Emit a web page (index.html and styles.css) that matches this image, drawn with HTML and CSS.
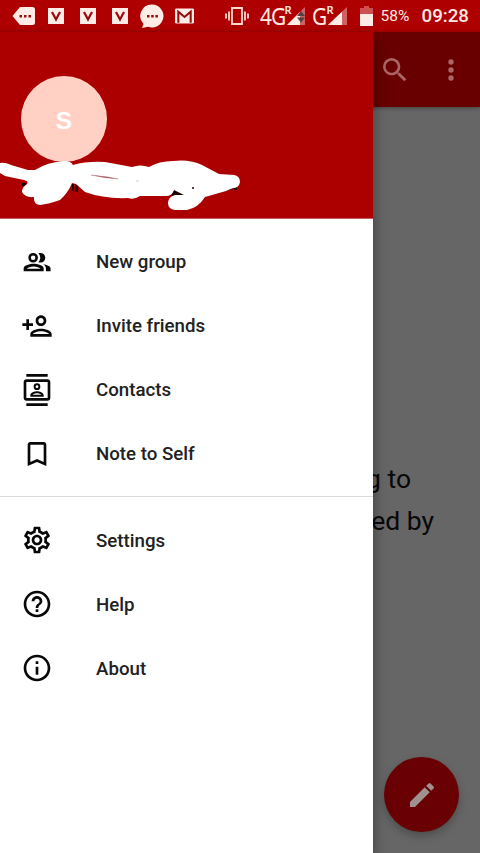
FILE: index.html
```html
<!DOCTYPE html>
<html lang="en">
<head>
<meta charset="utf-8">
<title>Messages</title>
<link rel="stylesheet" href="styles.css">
</head>
<body>
<div class="screen">
  <header class="status">
    <div class="notifications">
      <svg width="24" height="20" viewBox="0 0 24 20"><path class="light" d="M8 1h12.500a2.500 2.500 0 0 1 2.500 2.500v13a2.500 2.500 0 0 1-2.500 2.500H8L.5 10z"/><path class="red" d="M7.500 9h2.500v2.500H7.500zM12 9h2.500v2.500H12zM16.500 9h2.500v2.500h-2.500z"/></svg>
      <svg width="16" height="16" viewBox="0 0 16 16"><path class="light" d="M0 0h16v16H0z"/><path class="red-line" d="M4 4l4 7.500 4-7.500"/></svg>
      <svg width="16" height="16" viewBox="0 0 16 16"><path class="light" d="M0 0h16v16H0z"/><path class="red-line" d="M4 4l4 7.500 4-7.500"/></svg>
      <svg width="16" height="16" viewBox="0 0 16 16"><path class="light" d="M0 0h16v16H0z"/><path class="red-line" d="M4 4l4 7.500 4-7.500"/></svg>
      <svg class="bubble" width="24" height="24" viewBox="0 0 24 24"><path class="light" d="M12 .5a11.500 11.500 0 1 1-4 22.300L2 24l1.500-4A11.500 11.500 0 0 1 12 .5z"/><path class="red" d="M7 11h2.500v2.500H7zM11.200 11h2.500v2.500h-2.500zM15.400 11h2.500v2.500h-2.500z"/></svg>
      <svg class="mail" width="19" height="16" viewBox="0 0 20 16"><rect class="light" width="20" height="16" rx="1.500"/><path class="red-line" d="M3.500 15V3.500L10 9l6.500-5.500V15"/></svg>
    </div>
    <div class="system">
      <svg class="vibrate" width="24" height="20" viewBox="0 0 24 20"><path class="light-line" d="M7 2h10v16H7zM4 5.500v9M1 7.500v5M20 5.500v9M23 7.500v5"/></svg>
      <span class="net net-a"><b>4G</b><sup>R</sup></span>
      <svg class="signal signal-a" width="18" height="18" viewBox="0 0 18 18"><path class="faint" d="M0 18L18 0v18z"/><path class="light" d="M0 18L13 5v13z"/><path class="arrows" d="M14 4l4 5h-8zM10 10.500h8l-4 5z"/></svg>
      <span class="net net-b"><b>G</b><sup>R</sup></span>
      <svg class="signal signal-b" width="19" height="18" viewBox="0 0 19 18"><path class="faint" d="M0 18L19 0v18z"/><path class="light" d="M0 18L14 4.700V18z"/></svg>
      <svg class="battery" width="13" height="20" viewBox="0 0 13 20"><path class="charge-empty" d="M4 0h5v2h4v7H0V2h4z"/><path class="light" d="M0 8h13v12H0z"/></svg>
      <span class="percent">58%</span>
      <span class="clock">09:28</span>
    </div>
  </header>

  <main class="page">
    <div class="toolbar">
      <svg width="32" height="32" viewBox="0 0 24 24"><path d="M15.500 14h-.79l-.28-.27A6.471 6.471 0 0 0 16 9.500 6.500 6.500 0 1 0 9.500 16c1.610 0 3.090-.59 4.230-1.570l.27.28v.79l5 4.990L20.490 19l-4.990-5zm-6 0C7.010 14 5 11.990 5 9.500S7.010 5 9.500 5 14 7.010 14 9.500 11.990 14 9.500 14z"/></svg>
      <svg width="32" height="32" viewBox="0 0 24 24"><circle cx="12" cy="6" r="2"/><circle cx="12" cy="12" r="2"/><circle cx="12" cy="18" r="2"/></svg>
    </div>
    <div class="empty">
      <p class="line-one">g to</p>
      <p class="line-two">ed by</p>
    </div>
    <div class="compose">
      <svg width="32" height="32" viewBox="0 0 24 24"><path d="M3 17.250V21h3.750L17.810 9.940l-3.750-3.750L3 17.250zM20.710 7.040a1 1 0 0 0 0-1.410l-2.340-2.340a1 1 0 0 0-1.410 0l-1.830 1.830 3.750 3.750 1.830-1.830z"/></svg>
    </div>
  </main>

  <aside class="drawer">
    <div class="profile">
      <div class="avatar">S</div>
      <svg class="scribble" width="250" height="52" viewBox="0 158 250 52">
        <path class="ink" d="M22 183h4v3h-4zM72 184h2v7h-2zM75 185h3v7h-3zM172 188h16v8h-16zM227 187h4v3h-4zM234 187h3v3h-3z"/>
        <path class="paint" d="M0 163Q5 162 11 165L28 170H35Q47 162 65 161Q71 161 73 165Q87 161 105 162L132 167Q140 164 149 167Q159 161 173 161Q190 159 202 165L219 174L234 175Q240 176 240 182Q239 188 233 188L226 191L205 197Q198 208 187 210H175Q168 209 168 203Q168 197 175 195H184L174 190Q172 196 166 196H140Q134 200 128 198Q104 199 85 192L76 184L72 183Q68 193 60 200Q49 204 40 205Q33 204 34 197Q25 198 22 192Q22 187 27 184Q29 181 24 180L5 176L0 173z"/>
        <path class="gap" d="M91 175L108 177L118 179L104 177.500zM136 181h3"/>
        <circle class="ink" cx="193" cy="188" r="1"/>
      </svg>
    </div>
    <nav class="menu">
      <div class="item"><svg viewBox="0 0 24 24"><path fill-rule="evenodd" d="M9.100 5.200a3.600 3.600 0 1 1 0 7.200 3.600 3.600 0 0 1 0-7.200zm0 1.900a1.700 1.700 0 1 0 0 3.400 1.700 1.700 0 0 0 0-3.400zM13 5.400c3-.9 5.200 1 5.200 3.400s-2.200 4.300-5.200 3.400c1.900-2 1.900-4.800 0-6.800zM2 19v-2.300c0-2.100 4.600-3.300 7.500-3.300s7.500 1.200 7.500 3.300V19zm2.300-1.900h10.400c-.6-.9-3-1.800-5.200-1.800s-4.600.9-5.200 1.800zM16.600 13.700c2.600.4 5.600 1.300 5.600 3.200V19h-3.500v-2.200c0-1.300-.8-2.300-2.100-3.100z"/></svg><span>New group</span></div>
      <div class="item"><svg viewBox="0 0 24 24"><path d="M15 12c2.210 0 4-1.790 4-4s-1.790-4-4-4-4 1.790-4 4 1.790 4 4 4zm0-6c1.100 0 2 .9 2 2s-.9 2-2 2-2-.9-2-2 .9-2 2-2zm0 8c-2.670 0-8 1.340-8 4v2h16v-2c0-2.660-5.330-4-8-4zm-6 4c.22-.72 3.310-2 6-2 2.700 0 5.800 1.290 6 2H9zm-3-3v-3h3v-2H6V7H4v3H1v2h3v3z"/></svg><span>Invite friends</span></div>
      <div class="item"><svg viewBox="0 0 24 24"><path d="M20 4H4c-1.100 0-2 .9-2 2v12c0 1.100.9 2 2 2h16c1.100 0 2-.9 2-2V6c0-1.100-.9-2-2-2zm0 14H4V6h16v12zM4 0h16v2H4zm0 22h16v2H4zm8-10a2.500 2.500 0 0 0 0-5 2.500 2.500 0 0 0 0 5zm0-3.500c.55 0 1 .45 1 1s-.45 1-1 1-1-.45-1-1 .45-1 1-1zm5 7.490C17 13.900 13.690 13 12 13s-5 .9-5 2.990V17h10v-1.010zm-8.190-.49c.61-.52 2.030-1 3.190-1 1.170 0 2.590.48 3.200 1H8.810z"/></svg><span>Contacts</span></div>
      <div class="item"><svg viewBox="0 0 24 24"><path d="M17 3H7c-1.100 0-2 .9-2 2v16l7-3 7 3V5c0-1.100-.9-2-2-2zm0 15l-5-2.180L7 18V5h10v13z"/></svg><span>Note to Self</span></div>
    </nav>
    <nav class="menu more">
      <div class="item"><svg viewBox="0 0 24 24"><path d="M19.430 12.980c.04-.32.07-.64.07-.98 0-.34-.03-.66-.07-.98l2.110-1.650c.19-.15.24-.42.12-.64l-2-3.460c-.09-.16-.26-.25-.44-.25-.06 0-.12.01-.17.03l-2.490 1c-.52-.4-1.080-.73-1.690-.98l-.38-2.650C14.460 2.180 14.250 2 14 2h-4c-.25 0-.46.18-.49.42l-.38 2.650c-.61.25-1.170.59-1.690.98l-2.490-1c-.06-.02-.12-.03-.18-.03-.17 0-.34.09-.43.25l-2 3.460c-.13.22-.07.49.12.64l2.110 1.650c-.04.32-.07.65-.07.98 0 .33.03.66.07.98l-2.110 1.650c-.19.15-.24.42-.12.64l2 3.460c.09.16.26.25.44.25.06 0 .12-.01.17-.03l2.490-1c.52.4 1.080.73 1.690.98l.38 2.650c.03.24.24.42.49.42h4c.25 0 .46-.18.49-.42l.38-2.650c.61-.25 1.170-.59 1.690-.98l2.490 1c.06.02.12.03.18.03.17 0 .34-.09.43-.25l2-3.460c.12-.22.07-.49-.12-.64l-2.110-1.650zm-1.980-1.710c.04.31.05.52.05.73 0 .21-.02.43-.05.73l-.14 1.130.89.7 1.080.84-.7 1.210-1.270-.51-1.040-.42-.9.68c-.43.32-.84.56-1.250.73l-1.060.43-.16 1.130-.2 1.350h-1.400l-.19-1.350-.16-1.130-1.060-.43c-.43-.18-.83-.41-1.230-.71l-.91-.7-1.060.43-1.270.51-.7-1.210 1.080-.84.89-.7-.14-1.130c-.03-.31-.05-.54-.05-.74s.02-.43.05-.73l.14-1.130-.89-.7-1.080-.84.7-1.210 1.270.51 1.040.42.9-.68c.43-.32.84-.56 1.250-.73l1.060-.43.16-1.130.2-1.350h1.390l.19 1.350.16 1.130 1.060.43c.43.18.83.41 1.230.71l.91.7 1.060-.43 1.270-.51.7 1.210-1.070.85-.89.7.14 1.130zM12 8c-2.210 0-4 1.790-4 4s1.790 4 4 4 4-1.790 4-4-1.790-4-4-4zm0 6c-1.100 0-2-.9-2-2s.9-2 2-2 2 .9 2 2-.9 2-2 2z"/></svg><span>Settings</span></div>
      <div class="item"><svg viewBox="0 0 24 24"><path d="M11 18h2v-2h-2v2zm1-16C6.480 2 2 6.480 2 12s4.480 10 10 10 10-4.480 10-10S17.520 2 12 2zm0 18c-4.410 0-8-3.590-8-8s3.590-8 8-8 8 3.590 8 8-3.590 8-8 8zm0-14c-2.210 0-4 1.790-4 4h2c0-1.100.9-2 2-2s2 .9 2 2c0 2-3 1.750-3 5h2c0-2.250 3-2.500 3-5 0-2.210-1.790-4-4-4z"/></svg><span>Help</span></div>
      <div class="item"><svg viewBox="0 0 24 24"><path d="M11 7h2v2h-2zm0 4h2v6h-2zm1-9C6.480 2 2 6.480 2 12s4.480 10 10 10 10-4.480 10-10S17.520 2 12 2zm0 18c-4.410 0-8-3.590-8-8s3.590-8 8-8 8 3.590 8 8-3.590 8-8 8z"/></svg><span>About</span></div>
    </nav>
  </aside>
</div>
</body>
</html>
```
FILE: styles.css
```css
* { box-sizing: border-box; }
body { margin: 0; font-family: Roboto, "Liberation Sans", sans-serif; }
p { margin: 0; }
svg { display: block; flex: none; }

.screen {
  position: relative;
  display: flex;
  flex-direction: column;
  width: 480px;
  height: 853px;
  overflow: hidden;
  background: #666;
}

/* Status bar */
.status {
  display: flex;
  justify-content: space-between;
  height: 32px;
  background: #ae0000;
  color: #ffe9e2;
}
.notifications { display: flex; align-items: center; gap: 16px; padding-left: 12px; }
.notifications svg:first-child { margin-right: -4px; }
.bubble { margin-left: -4px; }
.mail { margin-left: -5px; }
.system { display: flex; align-items: center; padding-right: 11px; white-space: nowrap; }
.light { fill: #ffece7; }
.red { fill: #940d0d; }
.red-line { fill: none; stroke: #940d0d; stroke-width: 2.2; }
.light-line { fill: none; stroke: #ffd9d2; stroke-width: 1.8; }
.faint { fill: #cf6262; }
.arrows { fill: #553f3f; }
.charge-empty { fill: #cd5151; }
.vibrate { margin-right: 11px; }
.net {
  display: flex;
  align-items: center;
  font: 24px/32px "Noto Sans", sans-serif;
  letter-spacing: -1px;
}
.net b { font-weight: 400; transform: scaleX(.87); transform-origin: left; }
.net-a b { width: 25px; }
.net-b b { width: 15px; }
.net sup { align-self: flex-start; margin-top: 3px; font-size: 11px; line-height: 13px; font-weight: 600; }
.net-a { width: 31px; }
.net-b { width: 20px; }
.signal { margin-left: -4px; }
.signal-a { margin-right: 7px; }
.signal-b { margin-right: 13px; }
.battery { margin-right: 8px; }
.percent { width: 41px; font-size: 15.500px; }
.clock { font-size: 18.700px; font-weight: 500; }

/* Dimmed conversation list */
.page { flex: 1; display: flex; flex-direction: column; }
.toolbar {
  display: flex;
  justify-content: flex-end;
  align-items: center;
  gap: 24px;
  height: 75px;
  padding: 0 13px 0 0;
  background: #680000;
  box-shadow: 0 1px 4px rgba(0, 0, 0, .35);
}
.toolbar svg { fill: #a66; }
.empty {
  flex: 1;
  padding-top: 351px;
  color: #080808;
  font-size: 26.500px;
  line-height: 41.500px;
  text-align: right;
}
.line-one { padding-right: 69px; }
.line-two { padding-right: 46px; }
.compose {
  display: grid;
  place-items: center;
  align-self: flex-end;
  width: 75px;
  height: 75px;
  margin: 0 21px 21px 0;
  border-radius: 50%;
  background: #680004;
  box-shadow: 0 4px 9px rgba(0, 0, 0, .25);
}
.compose svg { fill: #a09090; }

/* Navigation drawer, lies over the page */
.drawer {
  position: absolute;
  top: 32px;
  left: 0;
  bottom: 0;
  width: 373px;
  background: #fff;
  box-shadow: 0 8px 14px rgba(0, 0, 0, .4);
}
.profile { height: 187px; padding-top: 44px; background: #ac0000; border-bottom: 1px solid #c65c5c; }
.avatar {
  width: 86px;
  height: 86px;
  margin-left: 21px;
  border-radius: 50%;
  background: #ffd0c3;
  color: #fff;
  font: bold 24.500px/89px "Liberation Sans", sans-serif;
  text-align: center;
}
.scribble { margin-top: -4px; }
.paint { fill: #fff; }
.ink { fill: #210000; }
.gap { fill: #7a1a1a; stroke: #b88; stroke-width: .5; }
.menu { padding: 11px 0 10px; }
.more { border-top: 1px solid #dcdcdc; padding-top: 12px; }
.item {
  display: flex;
  align-items: center;
  gap: 43px;
  height: 64px;
  padding-left: 21px;
  color: #212121;
  font-size: 18.700px;
  font-weight: 500;
}
.item svg { width: 32px; height: 32px; margin-bottom: 1px; fill: #080808; }
.more .item svg { margin-bottom: 2px; }
```
